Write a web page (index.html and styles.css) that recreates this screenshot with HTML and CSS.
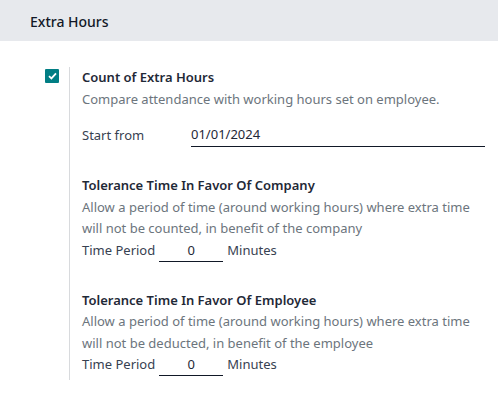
FILE: index.html
```html
<!DOCTYPE html>
<html lang="en">
<head>
    <meta charset="UTF-8">
    <title>Extra Hours</title>
    <link rel="stylesheet" href="styles.css">
</head>
<body>
    <div class="section-title">Extra Hours</div>

    <div class="setting">
        <div class="setting-check">
            <span class="checkbox">
                <svg width="9" height="8" viewBox="0 0 9 8">
                    <path d="M1 4.2 L3.4 6.4 L8 1.4" fill="none" stroke="#fff" stroke-width="1.8"/>
                </svg>
            </span>
        </div>
        <div class="setting-body">
            <div class="setting-name">Count of Extra Hours</div>
            <div class="setting-help">Compare attendance with working hours set on employee.</div>

            <div class="field-row">
                <label class="field-label">Start from</label>
                <div class="field-input date-input">01/01/2024</div>
            </div>

            <div class="sub-setting">
                <div class="setting-name">Tolerance Time In Favor Of Company</div>
                <div class="setting-help">Allow a period of time (around working hours) where extra time will not be counted, in benefit of the company</div>
                <div class="period-row">
                    <span>Time Period</span>
                    <div class="field-input small-input">0</div>
                    <span>Minutes</span>
                </div>
            </div>

            <div class="sub-setting">
                <div class="setting-name">Tolerance Time In Favor Of Employee</div>
                <div class="setting-help">Allow a period of time (around working hours) where extra time will not be deducted, in benefit of the employee</div>
                <div class="period-row">
                    <span>Time Period</span>
                    <div class="field-input small-input">0</div>
                    <span>Minutes</span>
                </div>
            </div>
        </div>
    </div>
</body>
</html>
```

FILE: styles.css
```css
* {
    margin: 0;
    padding: 0;
    box-sizing: border-box;
}

body {
    font-family: 'Noto Sans', sans-serif;
    font-size: 13px;
    line-height: 21.5px;
    color: #374151;
    background: white;
}

.section-title {
    height: 41px;
    padding: 11px 0 0 30px;
    background-color: #e7e9ed;
    font-size: 14px;
    font-weight: 500;
    color: #111827;
}

.setting {
    display: flex;
    margin-top: 26px;
    padding-left: 45px;
}

.setting-check {
    width: 24px;
    padding-top: 2px;
}

.checkbox {
    display: flex;
    align-items: center;
    justify-content: center;
    width: 14px;
    height: 14px;
    background-color: #017e84;
    border-radius: 1px;
}

.setting-body {
    flex: 1;
    border-left: 1px solid #d8dadd;
    padding: 0 13px 4px 12px;
}

.setting-name {
    font-weight: 600;
    color: #1f2937;
}

.setting-help {
    color: #6c757d;
}

.field-row {
    display: flex;
    align-items: flex-end;
    margin-top: 13px;
    height: 25px;
}

.field-label {
    width: 109px;
    padding-bottom: 2px;
}

.field-input {
    border-bottom: 1px solid #111827;
    color: #1f2937;
}

.date-input {
    flex: 1;
    padding-bottom: 1px;
    margin-bottom: 1px;
}

.sub-setting {
    margin-top: 27px;
}

.sub-setting + .sub-setting {
    margin-top: 28px;
}

.period-row {
    display: flex;
    align-items: center;
    height: 22px;
}

.small-input {
    width: 64px;
    margin: 0 4px 0 4px;
    text-align: center;
    height: 22px;
}
```
